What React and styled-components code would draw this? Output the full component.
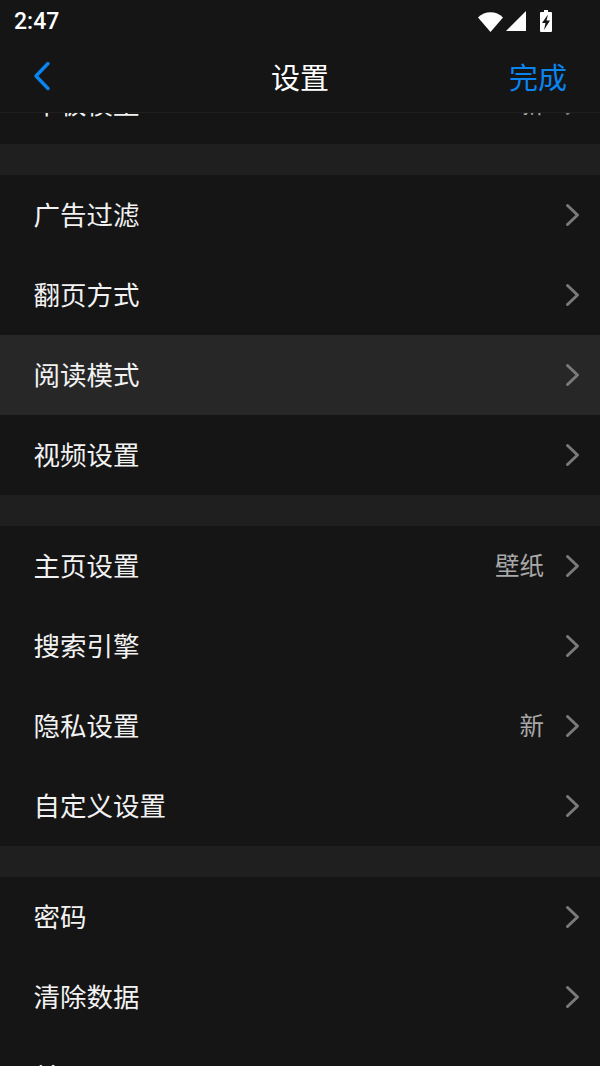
import React from "react";
import styled, { createGlobalStyle } from "styled-components";

const GlobalStyle = createGlobalStyle`
  html, body {
    margin: 0;
    padding: 0;
    background: #151515;
  }
  body {
    font-family: "Noto Sans CJK SC", "Liberation Sans", sans-serif;
  }
`;

const Screen = styled.div`
  width: 600px;
  height: 1066px;
  display: flex;
  flex-direction: column;
  overflow: hidden;
  background: #151515;
`;

const StatusBar = styled.div`
  height: 42px;
  display: flex;
  align-items: center;
  justify-content: space-between;
  padding: 0 47px 0 14px;
  color: #fff;
`;

const Clock = styled.span`
  font-family: Roboto, "Liberation Sans", sans-serif;
  font-size: 23px;
  font-weight: 500;
`;

const StatusIcons = styled.div`
  display: flex;
  align-items: center;
  gap: 3px;
`;

const NavBar = styled.div`
  height: 71px;
  display: grid;
  grid-template-columns: 1fr auto 1fr;
  align-items: center;
  padding: 0 33px 2px 33px;
  border-bottom: 1px solid #1f1f1f;
  box-sizing: border-box;
`;

const BackButton = styled.div`
  display: flex;
  align-items: center;
`;

const NavTitle = styled.div`
  color: #fff;
  font-size: 29px;
  line-height: 40px;
`;

const DoneButton = styled.div`
  color: #0a84f0;
  font-size: 29px;
  line-height: 40px;
  text-align: right;
`;

const Scroller = styled.div`
  flex: 1;
  overflow: hidden;
`;

const List = styled.div`
  margin-top: -49px;
  display: flex;
  flex-direction: column;
`;

const Gap = styled.div`
  height: 31px;
  background: #1f1f1f;
`;

const Row = styled.div`
  height: 80px;
  flex: none;
  display: flex;
  align-items: center;
  padding: 0 19px 0 33.5px;
  background: ${(p) => (p.$active ? "#272727" : "#151515")};
`;

const Label = styled.span`
  flex: 1;
  color: #f2f2f2;
  font-size: 26.5px;
  line-height: 36px;
  margin-bottom: 2px;
`;

const Value = styled.span`
  color: #a8a8a8;
  font-size: 24.5px;
  line-height: 36px;
  margin: 0 21px 2px 0;
`;

const Chevron = () => (
  <svg width="16" height="24" viewBox="0 0 16 24" fill="none">
    <path d="M2.5 2.5 L12.5 12 L2.5 21.5" stroke="#7a7a7a" strokeWidth="3" strokeLinecap="round" strokeLinejoin="round" />
  </svg>
);

const groups = [
  [{ label: "平板模型", value: "新" }],
  [
    { label: "广告过滤" },
    { label: "翻页方式" },
    { label: "阅读模式", active: true },
    { label: "视频设置" },
  ],
  [
    { label: "主页设置", value: "壁纸" },
    { label: "搜索引擎" },
    { label: "隐私设置", value: "新" },
    { label: "自定义设置" },
  ],
  [{ label: "密码" }, { label: "清除数据" }, { label: "关于" }],
];

const App = () => (
  <Screen>
    <GlobalStyle />
    <StatusBar>
      <Clock>2:47</Clock>
      <StatusIcons>
        <svg width="25" height="22" viewBox="0 0 25 22">
          <path d="M0 7.5 C6.5 0.5 18.5 0.5 25 7.5 L12.5 22 Z" fill="#fff" />
        </svg>
        <svg width="20" height="22" viewBox="0 0 20 22">
          <path d="M0 21 L20 1 L20 21 Z" fill="#fff" />
        </svg>
        <svg width="14" height="24" viewBox="0 0 14 24" style={{ marginLeft: 10 }}>
          <path d="M5 1 H9 V3 H12 Q13 3 13 4 V22 Q13 23 12 23 H2 Q1 23 1 22 V4 Q1 3 2 3 H5 Z" fill="#fff" />
          <path d="M9 5.5 L3 14 H6.5 L5 21 L11 11.5 H7.5 Z" fill="#151515" />
        </svg>
      </StatusIcons>
    </StatusBar>
    <NavBar>
      <BackButton>
        <svg width="18" height="30" viewBox="0 0 18 30" fill="none">
          <path d="M15 2.5 L3 15 L15 27.5" stroke="#0a84f0" strokeWidth="3.4" strokeLinecap="round" strokeLinejoin="round" />
        </svg>
      </BackButton>
      <NavTitle>设置</NavTitle>
      <DoneButton>完成</DoneButton>
    </NavBar>
    <Scroller>
      <List>
        {groups.map((rows, i) => (
          <React.Fragment key={i}>
            {i > 0 && <Gap />}
            {rows.map((row) => (
              <Row key={row.label} $active={row.active}>
                <Label>{row.label}</Label>
                {row.value && <Value>{row.value}</Value>}
                <Chevron />
              </Row>
            ))}
          </React.Fragment>
        ))}
      </List>
    </Scroller>
  </Screen>
);

export default App;
